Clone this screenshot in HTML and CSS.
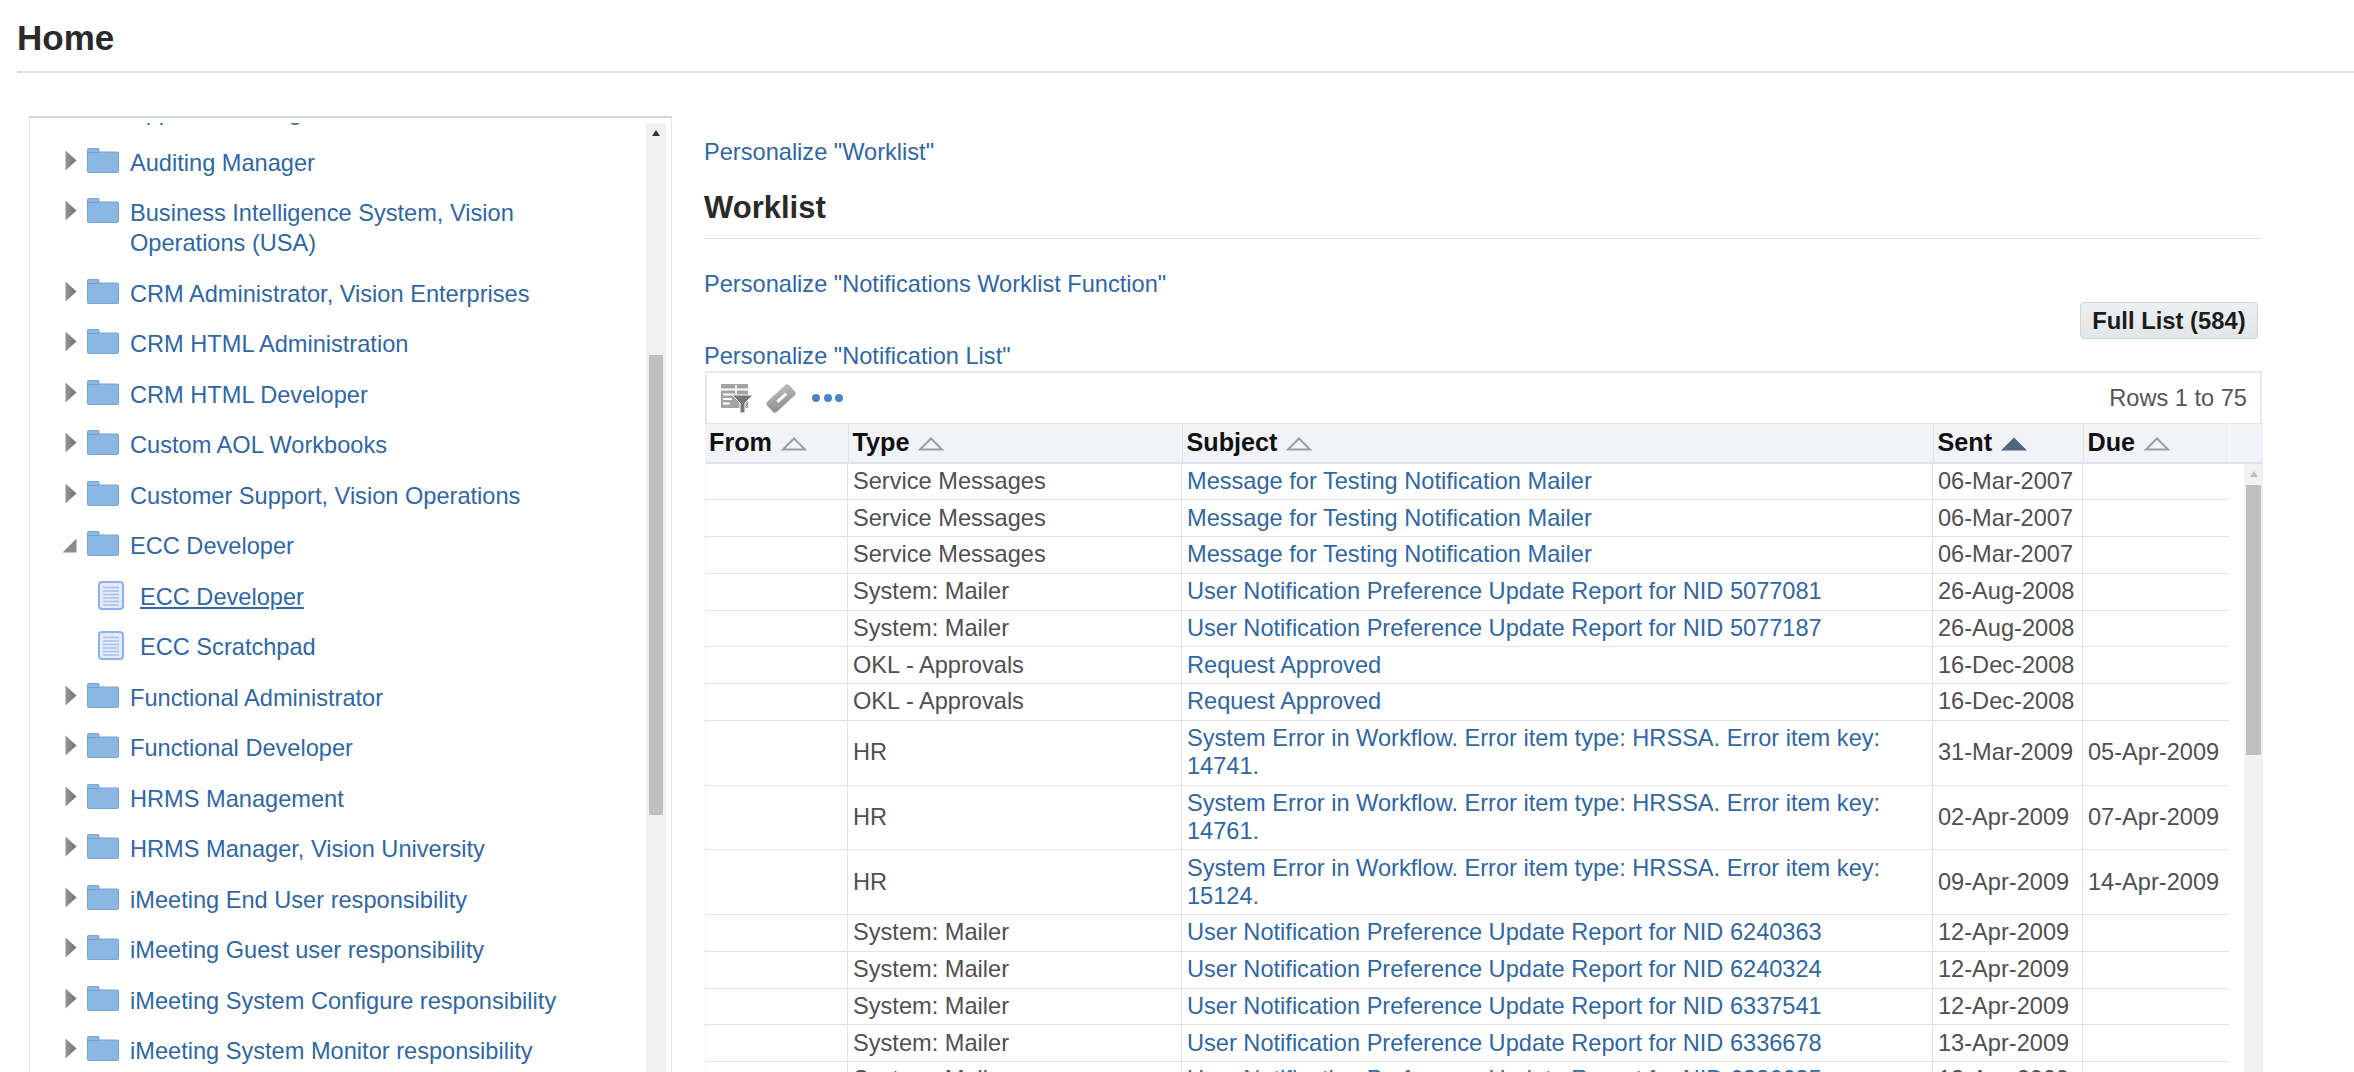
FILE: index.html
```html
<!DOCTYPE html>
<html lang="en">
<head>
    <meta charset="UTF-8">
    <title>Home</title>
    <link rel="stylesheet" href="styles.css">
</head>
<body>
    <svg class="icon-defs" width="0" height="0">
        <defs>
            <linearGradient id="arrowShade" x1="0" y1="0" x2="1" y2="0">
                <stop offset="0" stop-color="#969696"/>
                <stop offset="1" stop-color="#707070"/>
            </linearGradient>
            <linearGradient id="eraserShade" x1="0" y1="1" x2="1" y2="0">
                <stop offset="0" stop-color="#8e8e8e"/>
                <stop offset="1" stop-color="#bdbdbd"/>
            </linearGradient>
            <symbol id="arrowRight" viewBox="0 0 12 21">
                <path d="M0.5 0.5 L11.5 10.5 L0.5 20.5 Z" fill="url(#arrowShade)"/>
            </symbol>
            <symbol id="arrowOpen" viewBox="0 0 15 15">
                <path d="M14.5 0.5 V14.5 H0.5 Z" fill="#8c8c8c"/>
            </symbol>
            <symbol id="folder" viewBox="0 0 32 25">
                <path d="M1.5 0.5 H11 a1 1 0 0 1 1 1 V4 H30.5 a1 1 0 0 1 1 1 V23.5 a1 1 0 0 1 -1 1 H1.5 a1 1 0 0 1 -1 -1 V1.5 a1 1 0 0 1 1 -1 Z" fill="#8bb7e3" stroke="#7aa3cd"/>
                <path d="M1 4.500 H12" stroke="#75a0cc" stroke-width="1"/>
            </symbol>
            <symbol id="page" viewBox="0 0 26 29">
                <rect x="1" y="1" width="24" height="27" rx="3" fill="#e3ebfd" stroke="#8db1ee" stroke-width="2"/>
                <path d="M5 6.500 H21 M5 10 H21 M5 13.500 H21 M5 17 H21 M5 20.500 H21 M5 24 H21" stroke="#a8bff0" stroke-width="1.500"/>
            </symbol>
            <symbol id="sortOff" viewBox="0 0 26 14">
                <path d="M13 1.500 L24 12.500 H2 Z" fill="none" stroke="#93a1ae" stroke-width="2"/>
            </symbol>
            <symbol id="sortOn" viewBox="0 0 26 14">
                <path d="M13 0.500 L26 13.500 H0 Z" fill="#4f6580"/>
            </symbol>
        </defs>
    </svg>

    <div class="page-header">
        <h1>Home</h1>
    </div>

    <div class="main">
        <div class="tree-panel">
            <div class="tree-clip">
                <ul class="tree">
                    <li class="tree-row"><svg class="arrow"><use href="#arrowRight"/></svg><svg class="folder"><use href="#folder"/></svg><a>Approval Manager</a></li>
                    <li class="tree-row"><svg class="arrow"><use href="#arrowRight"/></svg><svg class="folder"><use href="#folder"/></svg><a>Auditing Manager</a></li>
                    <li class="tree-row"><svg class="arrow"><use href="#arrowRight"/></svg><svg class="folder"><use href="#folder"/></svg><a>Business Intelligence System, Vision Operations (USA)</a></li>
                    <li class="tree-row"><svg class="arrow"><use href="#arrowRight"/></svg><svg class="folder"><use href="#folder"/></svg><a>CRM Administrator, Vision Enterprises</a></li>
                    <li class="tree-row"><svg class="arrow"><use href="#arrowRight"/></svg><svg class="folder"><use href="#folder"/></svg><a>CRM HTML Administration</a></li>
                    <li class="tree-row"><svg class="arrow"><use href="#arrowRight"/></svg><svg class="folder"><use href="#folder"/></svg><a>CRM HTML Developer</a></li>
                    <li class="tree-row"><svg class="arrow"><use href="#arrowRight"/></svg><svg class="folder"><use href="#folder"/></svg><a>Custom AOL Workbooks</a></li>
                    <li class="tree-row"><svg class="arrow"><use href="#arrowRight"/></svg><svg class="folder"><use href="#folder"/></svg><a>Customer Support, Vision Operations</a></li>
                    <li class="tree-row"><svg class="arrow arrow-open"><use href="#arrowOpen"/></svg><svg class="folder"><use href="#folder"/></svg><a>ECC Developer</a></li>
                    <li class="tree-row tree-leaf"><svg class="page"><use href="#page"/></svg><a class="current">ECC Developer</a></li>
                    <li class="tree-row tree-leaf"><svg class="page"><use href="#page"/></svg><a>ECC Scratchpad</a></li>
                    <li class="tree-row"><svg class="arrow"><use href="#arrowRight"/></svg><svg class="folder"><use href="#folder"/></svg><a>Functional Administrator</a></li>
                    <li class="tree-row"><svg class="arrow"><use href="#arrowRight"/></svg><svg class="folder"><use href="#folder"/></svg><a>Functional Developer</a></li>
                    <li class="tree-row"><svg class="arrow"><use href="#arrowRight"/></svg><svg class="folder"><use href="#folder"/></svg><a>HRMS Management</a></li>
                    <li class="tree-row"><svg class="arrow"><use href="#arrowRight"/></svg><svg class="folder"><use href="#folder"/></svg><a>HRMS Manager, Vision University</a></li>
                    <li class="tree-row"><svg class="arrow"><use href="#arrowRight"/></svg><svg class="folder"><use href="#folder"/></svg><a>iMeeting End User responsibility</a></li>
                    <li class="tree-row"><svg class="arrow"><use href="#arrowRight"/></svg><svg class="folder"><use href="#folder"/></svg><a>iMeeting Guest user responsibility</a></li>
                    <li class="tree-row"><svg class="arrow"><use href="#arrowRight"/></svg><svg class="folder"><use href="#folder"/></svg><a>iMeeting System Configure responsibility</a></li>
                    <li class="tree-row"><svg class="arrow"><use href="#arrowRight"/></svg><svg class="folder"><use href="#folder"/></svg><a>iMeeting System Monitor responsibility</a></li>
                </ul>
            </div>
            <div class="tree-scroll">
                <div class="scroll-up"></div>
                <div class="tree-thumb"></div>
            </div>
        </div>

        <div class="content">
            <a class="personalize first-link">Personalize "Worklist"</a>
            <h2>Worklist</h2>
            <a class="personalize notif-link">Personalize "Notifications Worklist Function"</a>
            <div class="button-row">
                <button class="full-list">Full List (584)</button>
            </div>
            <a class="personalize list-link">Personalize "Notification List"</a>

            <div class="worklist">
                <div class="toolbar">
                    <svg class="tool-icon" viewBox="0 0 32 29">
                        <rect x="0" y="0" width="27" height="24" fill="#a3a3a3"/>
                        <path d="M0 5.500 H27 M2 10.500 H13 M2 15 H11 M2 19.500 H9" stroke="#fff" stroke-width="2"/>
                        <path d="M15 1 V12" stroke="#fff" stroke-width="1.500"/>
                        <path d="M11 11 H32 L24 19 V29 H19 V19 Z" fill="#777" stroke="#fff" stroke-width="1"/>
                    </svg>
                    <svg class="tool-icon" viewBox="0 0 32 29">
                        <rect x="1" y="7.500" width="30" height="14" rx="3" transform="rotate(-43 16 14.500)" fill="url(#eraserShade)"/>
                        <rect x="11" y="13" width="12" height="3" transform="rotate(-43 16 14.500)" fill="#fff"/>
                    </svg>
                    <div class="more-dots"><span></span><span></span><span></span></div>
                    <div class="rows-range">Rows 1 to 75</div>
                </div>
                <table class="head-table">
                    <tr>
                        <th class="col-from">From <svg class="sort"><use href="#sortOff"/></svg></th>
                        <th class="col-type">Type <svg class="sort"><use href="#sortOff"/></svg></th>
                        <th class="col-subject">Subject <svg class="sort"><use href="#sortOff"/></svg></th>
                        <th class="col-sent">Sent <svg class="sort"><use href="#sortOn"/></svg></th>
                        <th class="col-due">Due <svg class="sort"><use href="#sortOff"/></svg></th>
                        <th class="col-filler"></th>
                    </tr>
                </table>
                <div class="list-body">
                    <div class="body-rows">
                        <div class="list-row"><div></div><div>Service Messages</div><div><a>Message for Testing Notification Mailer</a></div><div>06-Mar-2007</div><div></div></div>
                        <div class="list-row"><div></div><div>Service Messages</div><div><a>Message for Testing Notification Mailer</a></div><div>06-Mar-2007</div><div></div></div>
                        <div class="list-row"><div></div><div>Service Messages</div><div><a>Message for Testing Notification Mailer</a></div><div>06-Mar-2007</div><div></div></div>
                        <div class="list-row"><div></div><div>System: Mailer</div><div><a>User Notification Preference Update Report for NID 5077081</a></div><div>26-Aug-2008</div><div></div></div>
                        <div class="list-row"><div></div><div>System: Mailer</div><div><a>User Notification Preference Update Report for NID 5077187</a></div><div>26-Aug-2008</div><div></div></div>
                        <div class="list-row"><div></div><div>OKL - Approvals</div><div><a>Request Approved</a></div><div>16-Dec-2008</div><div></div></div>
                        <div class="list-row"><div></div><div>OKL - Approvals</div><div><a>Request Approved</a></div><div>16-Dec-2008</div><div></div></div>
                        <div class="list-row"><div></div><div>HR</div><div><a>System Error in Workflow. Error item type: HRSSA. Error item key: 14741.</a></div><div>31-Mar-2009</div><div>05-Apr-2009</div></div>
                        <div class="list-row"><div></div><div>HR</div><div><a>System Error in Workflow. Error item type: HRSSA. Error item key: 14761.</a></div><div>02-Apr-2009</div><div>07-Apr-2009</div></div>
                        <div class="list-row"><div></div><div>HR</div><div><a>System Error in Workflow. Error item type: HRSSA. Error item key: 15124.</a></div><div>09-Apr-2009</div><div>14-Apr-2009</div></div>
                        <div class="list-row"><div></div><div>System: Mailer</div><div><a>User Notification Preference Update Report for NID 6240363</a></div><div>12-Apr-2009</div><div></div></div>
                        <div class="list-row"><div></div><div>System: Mailer</div><div><a>User Notification Preference Update Report for NID 6240324</a></div><div>12-Apr-2009</div><div></div></div>
                        <div class="list-row"><div></div><div>System: Mailer</div><div><a>User Notification Preference Update Report for NID 6337541</a></div><div>12-Apr-2009</div><div></div></div>
                        <div class="list-row"><div></div><div>System: Mailer</div><div><a>User Notification Preference Update Report for NID 6336678</a></div><div>13-Apr-2009</div><div></div></div>
                        <div class="list-row"><div></div><div>System: Mailer</div><div><a>User Notification Preference Update Report for NID 6336635</a></div><div>13-Apr-2009</div><div></div></div>
                    </div>
                    <div class="list-scroll">
                        <div class="scroll-up scroll-up-light"></div>
                        <div class="list-thumb"></div>
                    </div>
                </div>
            </div>
        </div>
    </div>
</body>
</html>
```

FILE: styles.css
```css
html, body {
    height: 1072px;
    overflow: hidden;
}

body {
    margin: 0;
    background: #fff;
    color: #505050;
    font-family: "Liberation Sans", Arial, sans-serif;
    font-size: 23.6px;
    line-height: 30px;
}

a {
    color: #2f67a5;
}

.icon-defs {
    display: block;
}

.page-header {
    margin-left: 17px;
    height: 71px;
    border-bottom: 2px solid #dde3ea;
}

h1 {
    margin: 0;
    padding-top: 18px;
    font-size: 35px;
    line-height: 40px;
    font-weight: bold;
    color: #2a2a2a;
}

.main {
    display: flex;
    padding-left: 29px;
    margin-top: 43px;
}

/* left tree */
.tree-panel {
    display: flex;
    width: 636px;
    height: 1000px;
    border: 1px solid #e2e6ea;
    border-top: 2px solid #cfd8e0;
    padding: 5px 5px 0 0;
}

.tree-clip {
    flex: 1;
    overflow: hidden;
}

.tree {
    list-style: none;
    margin: -36.25px 0 0;
    padding: 0 30px 0 35px;
}

.tree-row {
    display: flex;
    align-items: flex-start;
    padding: 10.25px 0;
}

.tree-row a {
    flex: 1;
}

.arrow {
    width: 12px;
    height: 21px;
    margin-top: 2px;
    flex: none;
}

.arrow-open {
    width: 15px;
    height: 15px;
    margin: 7px 0 0 -3px;
}

.folder {
    width: 32px;
    height: 25px;
    margin: 0 11px 0 10px;
    flex: none;
}

.tree-leaf {
    padding-left: 33px;
}

.page {
    width: 26px;
    height: 29px;
    margin: -1px 16px 0 0;
    flex: none;
}

.current {
    text-decoration: underline;
}

.tree-scroll {
    width: 20px;
    background: #f1f1f1;
    padding: 0 3px;
    box-sizing: border-box;
}

.scroll-up {
    width: 0;
    height: 0;
    margin: 7px auto 0;
    border-left: 4.500px solid transparent;
    border-right: 4.500px solid transparent;
    border-bottom: 6px solid #333;
}

.scroll-up-light {
    border-bottom-color: #bcbcbc;
}

.tree-thumb {
    height: 460px;
    margin-top: 219px;
    background: #bfbfbf;
}

/* right side */
.content {
    width: 1558px;
    margin-left: 32px;
}

.personalize {
    display: block;
}

.first-link {
    margin-top: 21px;
}

h2 {
    margin: 23px 0 0;
    padding-bottom: 12px;
    border-bottom: 1px solid #d9dfe5;
    font-size: 31px;
    line-height: 36px;
    color: #2a2a2a;
}

.notif-link {
    margin-top: 30px;
}

.button-row {
    display: flex;
    justify-content: flex-end;
    margin-top: 3px;
    padding-right: 4px;
}

.full-list {
    height: 37px;
    width: 178px;
    padding: 0;
    border: 1px solid #cdd4da;
    border-radius: 4px;
    background: linear-gradient(#eef0f2, #e2e6e9);
    color: #1c1c1c;
    font-family: inherit;
    font-size: 23.8px;
    font-weight: bold;
}

.list-link {
    margin-top: 2px;
}

.worklist {
    margin-left: 1px;
}

.toolbar {
    display: flex;
    align-items: center;
    gap: 12px;
    height: 50px;
    padding: 0 13px 0 14px;
    border: 2px solid #e4e8ed;
    border-bottom: 0;
}

.tool-icon {
    width: 32px;
    height: 29px;
}

.more-dots {
    display: flex;
    gap: 3.500px;
    margin-left: 3px;
}

.more-dots span {
    width: 8px;
    height: 8px;
    border-radius: 50%;
    background: #4a86c5;
}

.rows-range {
    margin-left: auto;
    color: #555;
}

.head-table {
    width: 1558px;
    table-layout: fixed;
    border-collapse: collapse;
}

.head-table th {
    height: 39px;
    padding: 0 0 2px 4px;
    box-sizing: border-box;
    background: #f1f3f7;
    border-right: 1px solid #dfe4ea;
    border-top: 1px solid #dfe4ea;
    border-bottom: 2px solid #dfe4ea;
    color: #111;
    font-size: 25.2px;
    font-weight: bold;
    text-align: left;
}

.sort {
    width: 26px;
    height: 14px;
    margin-left: 2px;
}

.col-from { width: 143px; }
.col-type { width: 334px; }
.col-subject { width: 751px; }
.col-sent { width: 150px; }
.col-due { width: 146px; }
.col-filler { width: 34px; }

.head-table .col-due {
    border-right-color: #fafbfc;
}

.head-table .col-filler {
    border-right: 0;
}

.list-body {
    display: flex;
    justify-content: space-between;
    width: 1558px;
}

.body-rows {
    width: 1524px;
}

.list-row {
    display: grid;
    grid-template-columns: 143px 334px 751px 150px 146px;
    border-bottom: 1px solid #dfe4ea;
}

.list-row > div {
    display: flex;
    align-items: center;
    padding: 3.375px 4px 4.375px 5px;
    border-right: 1px solid #dfe4ea;
    line-height: 28px;
}

.list-row > div:first-child {
    border-left: 1px solid #f0f2f5;
}

.list-row > div:last-child {
    border-right: 0;
}

.list-scroll {
    width: 19px;
    height: 700px;
    background: #f1f1f1;
    padding: 0 2px;
    box-sizing: border-box;
}

.list-thumb {
    height: 270px;
    margin-top: 8px;
    background: #bfbfbf;
}
```
